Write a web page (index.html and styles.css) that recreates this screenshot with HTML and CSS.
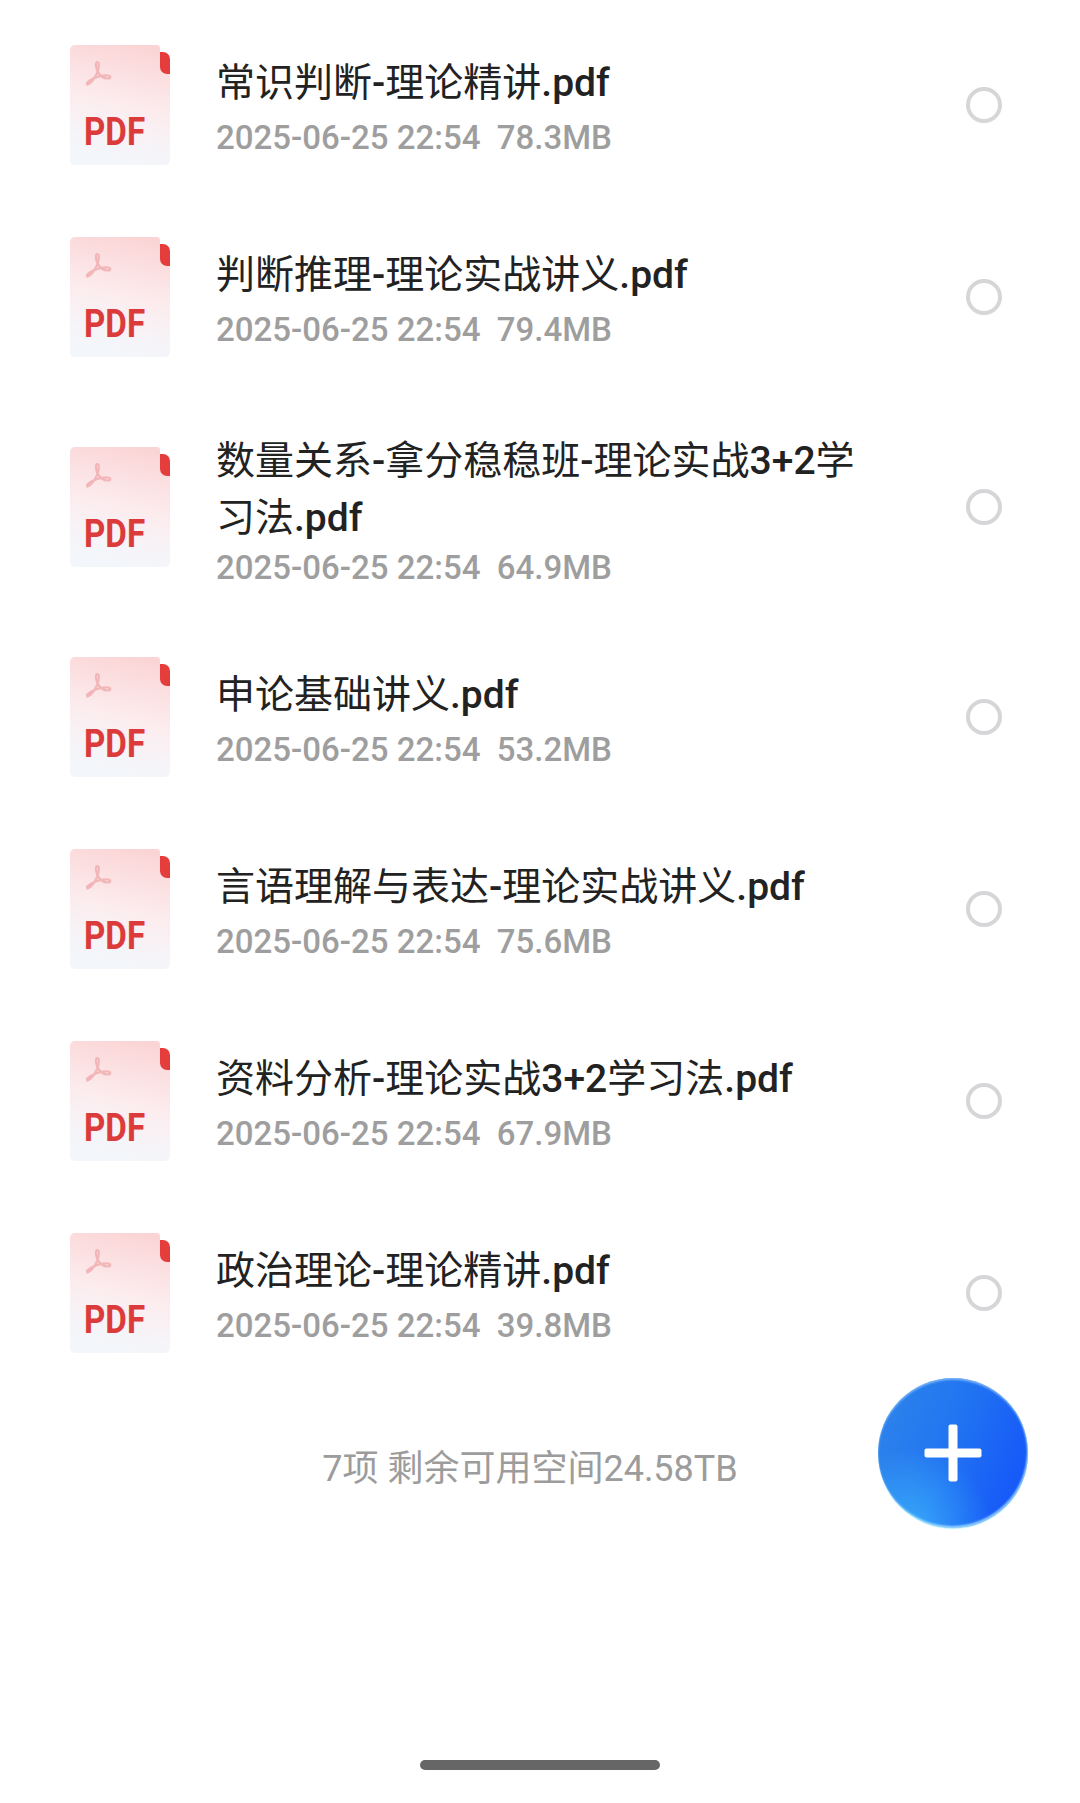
FILE: index.html
```html
<!DOCTYPE html>
<html lang="zh-CN">
<head>
<meta charset="utf-8">
<title>文件列表</title>
<link rel="stylesheet" href="styles.css">
</head>
<body>
<svg class="defs" width="0" height="0" aria-hidden="true">
  <defs>
    <linearGradient id="paper" x1="0.62" y1="0" x2="0.42" y2="1">
      <stop offset="0" stop-color="#fbd5d6"/>
      <stop offset="0.5" stop-color="#fcecee"/>
      <stop offset="0.8" stop-color="#f6f4f8"/>
      <stop offset="1" stop-color="#f3f7fb"/>
    </linearGradient>
    <symbol id="pdf" viewBox="0 0 100 120">
      <path d="M5 0H87a3 3 0 0 1 3 3V22a7 7 0 0 0 7 7h3V115a5 5 0 0 1-5 5H5a5 5 0 0 1-5-5V5a5 5 0 0 1 5-5Z" fill="url(#paper)"/>
      <path d="M90 7h3a7 7 0 0 1 7 7V29H97a7 7 0 0 1-7-7Z" fill="#e53c3c"/>
      <path d="M17.5 39.5C21 38 25 33 27.5 27C29 22 29.5 17 27.5 17C25.5 17 25.5 21 27 25C29 30 33 33.5 38 33.5C41 33.5 41 30.5 38 30.5C31 30 21 33 17 38Z" fill="none" stroke="#f2b6b8" stroke-width="2.2"/>
    </symbol>
  </defs>
</svg>
<main class="page">
  <ul class="list">
    <li class="row">
      <div class="icon"><svg viewBox="0 0 100 120" aria-hidden="true"><use href="#pdf"/></svg><span class="pdf-label">PDF</span></div>
      <div class="info">
        <div class="name">常识判断<span class="lat">-</span>理论精讲<span class="lat">.pdf</span></div>
        <div class="meta">2025-06-25 22:54&nbsp;&nbsp;78.3MB</div>
      </div>
      <span class="radio"></span>
    </li>
    <li class="row">
      <div class="icon"><svg viewBox="0 0 100 120" aria-hidden="true"><use href="#pdf"/></svg><span class="pdf-label">PDF</span></div>
      <div class="info">
        <div class="name">判断推理<span class="lat">-</span>理论实战讲义<span class="lat">.pdf</span></div>
        <div class="meta">2025-06-25 22:54&nbsp;&nbsp;79.4MB</div>
      </div>
      <span class="radio"></span>
    </li>
    <li class="row tall">
      <div class="icon"><svg viewBox="0 0 100 120" aria-hidden="true"><use href="#pdf"/></svg><span class="pdf-label">PDF</span></div>
      <div class="info">
        <div class="name">数量关系<span class="lat">-</span>拿分稳稳班<span class="lat">-</span>理论实战<span class="lat">3+2</span>学习法<span class="lat">.pdf</span></div>
        <div class="meta">2025-06-25 22:54&nbsp;&nbsp;64.9MB</div>
      </div>
      <span class="radio"></span>
    </li>
    <li class="row">
      <div class="icon"><svg viewBox="0 0 100 120" aria-hidden="true"><use href="#pdf"/></svg><span class="pdf-label">PDF</span></div>
      <div class="info">
        <div class="name">申论基础讲义<span class="lat">.pdf</span></div>
        <div class="meta">2025-06-25 22:54&nbsp;&nbsp;53.2MB</div>
      </div>
      <span class="radio"></span>
    </li>
    <li class="row">
      <div class="icon"><svg viewBox="0 0 100 120" aria-hidden="true"><use href="#pdf"/></svg><span class="pdf-label">PDF</span></div>
      <div class="info">
        <div class="name">言语理解与表达<span class="lat">-</span>理论实战讲义<span class="lat">.pdf</span></div>
        <div class="meta">2025-06-25 22:54&nbsp;&nbsp;75.6MB</div>
      </div>
      <span class="radio"></span>
    </li>
    <li class="row">
      <div class="icon"><svg viewBox="0 0 100 120" aria-hidden="true"><use href="#pdf"/></svg><span class="pdf-label">PDF</span></div>
      <div class="info">
        <div class="name">资料分析<span class="lat">-</span>理论实战<span class="lat">3+2</span>学习法<span class="lat">.pdf</span></div>
        <div class="meta">2025-06-25 22:54&nbsp;&nbsp;67.9MB</div>
      </div>
      <span class="radio"></span>
    </li>
    <li class="row">
      <div class="icon"><svg viewBox="0 0 100 120" aria-hidden="true"><use href="#pdf"/></svg><span class="pdf-label">PDF</span></div>
      <div class="info">
        <div class="name">政治理论<span class="lat">-</span>理论精讲<span class="lat">.pdf</span></div>
        <div class="meta">2025-06-25 22:54&nbsp;&nbsp;39.8MB</div>
      </div>
      <span class="radio"></span>
    </li>
  </ul>
  <p class="summary">7项 剩余可用空间24.58TB</p>
  <button class="fab" type="button" aria-label="新建"><svg viewBox="0 0 58 58" aria-hidden="true"><rect x="24.5" y="0.5" width="9" height="57" rx="2" fill="#fff"/><rect x="0.5" y="24.5" width="57" height="9" rx="2" fill="#fff"/></svg></button>
  <div class="home-bar"></div>
</main>
</body>
</html>
```
FILE: styles.css
```css
* { box-sizing: border-box; }
html, body { margin: 0; padding: 0; background: #fff; }
body { font-family: Roboto, "Noto Sans CJK SC", sans-serif; color: #222; }
.defs { position: absolute; }
.page { position: relative; width: 1080px; height: 1803px; padding-top: 9px; overflow: hidden; }
.list { list-style: none; margin: 0; padding: 0; }
.row { display: flex; align-items: center; height: 192px; padding: 0 78px 0 70px; }
.row.tall { height: 228px; }
.icon { position: relative; flex: none; width: 100px; height: 120px; margin-right: 46px; }
.icon svg { display: block; width: 100px; height: 120px; }
.pdf-label {
  position: absolute; left: 14px; top: 67px;
  font-family: Roboto, sans-serif;
  font-size: 39px; line-height: 40px; font-weight: 700; color: #dc3b3b;
  transform: scaleX(.85); transform-origin: left center;
}
.info { flex: 1; min-width: 0; padding: 5px 90px 0 0; }
.tall .info { padding-top: 8px; }
.name { font-size: 39px; line-height: 57px; font-weight: 400; color: #222; }
.lat { font-weight: 500; }
.meta { font-size: 33px; line-height: 44px; margin-top: 4px; color: #9e9e9e; font-weight: 500; }
.tall .meta { margin-top: -1px; }
.radio { flex: none; width: 36px; height: 36px; border: 4px solid #d6d6d8; border-radius: 50%; }
.summary { margin: 55px 0 0; padding-right: 20px; text-align: center; font-size: 36px; line-height: 50px; color: #9c9c9c; }
.fab {
  position: absolute; left: 878px; top: 1378px; width: 150px; height: 150px;
  display: flex; align-items: center; justify-content: center; padding: 0; border: 0; border-radius: 50%;
  background:
    radial-gradient(circle at 22% 100%, rgba(70, 200, 255, .6) 0%, rgba(70, 190, 255, 0) 42%),
    linear-gradient(110deg, #2f85ea 0%, #2275f1 45%, #1250fb 100%);
  box-shadow: inset 0 2px 2px rgba(170, 215, 250, .6), inset -1px -2px 2px rgba(190, 245, 255, .7), 0 1px 1px #b5effb;
}
.fab svg { width: 58px; height: 58px; }
.home-bar { position: absolute; left: 420px; top: 1760px; width: 240px; height: 10px; border-radius: 5px; background: #666; }
```
